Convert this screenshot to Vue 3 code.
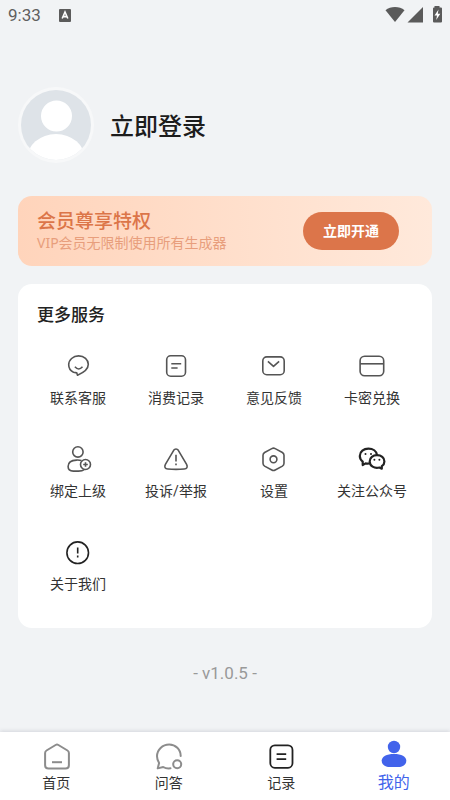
<script setup>
import { ref } from 'vue'

const services = [
  { id: 'contact', label: '联系客服' },
  { id: 'bill', label: '消费记录' },
  { id: 'mail', label: '意见反馈' },
  { id: 'card', label: '卡密兑换' },
  { id: 'bind', label: '绑定上级' },
  { id: 'report', label: '投诉/举报' },
  { id: 'settings', label: '设置' },
  { id: 'wechat', label: '关注公众号' },
  { id: 'about', label: '关于我们' },
]

const tabs = [
  { id: 'home', label: '首页' },
  { id: 'chat', label: '问答' },
  { id: 'record', label: '记录' },
  { id: 'mine', label: '我的' },
]

const active = ref('mine')
</script>

<template>
  <div class="page">
    <header class="status">
      <span class="time">9:33</span>
      <svg class="badge" viewBox="0 0 12 13" aria-hidden="true">
        <rect width="12" height="13" rx="1" fill="#5b5b5b" />
        <path d="M3.2 9.5 L6 3 L8.8 9.5 M4.2 7.6 H7.8" fill="none" stroke="#fff" stroke-width="1.6" />
      </svg>
      <svg class="signals" viewBox="0 0 60 20" aria-hidden="true">
        <path d="M0.5 5.2 C5.5 0.8 14.5 0.8 19.5 5.2 L10 17 Z" fill="#5a5a5a" />
        <path d="M22.5 17.5 L38 2 V17.5 Z" fill="#5a5a5a" />
        <path d="M49.5 1 H54.5 V2.5 H56 Q57 2.5 57 3.5 V16.5 Q57 17.5 56 17.5 H49 Q48 17.5 48 16.5 V3.5 Q48 2.5 49 2.5 H49.5 Z" fill="#5a5a5a" />
        <path d="M53.5 4.5 L49.5 10.5 H52 L51.2 15 L55.3 8.8 H52.8 Z" fill="#fff" />
      </svg>
    </header>

    <main class="content">
      <section class="profile">
        <svg class="avatar" viewBox="0 0 76 76" aria-hidden="true">
          <defs>
            <clipPath id="avatar-clip"><circle cx="38" cy="38" r="35" /></clipPath>
          </defs>
          <circle cx="38" cy="38" r="38" fill="#f7f8f9" />
          <g clip-path="url(#avatar-clip)">
            <rect width="76" height="76" fill="#dee3e8" />
            <circle cx="38.5" cy="29" r="15.5" fill="#fff" />
            <ellipse cx="38" cy="72" rx="29" ry="25" fill="#fff" />
          </g>
        </svg>
        <button type="button" class="login">立即登录</button>
      </section>

      <section class="vip">
        <div class="vip-text">
          <h2>会员尊享特权</h2>
          <p>VIP会员无限制使用所有生成器</p>
        </div>
        <button type="button" class="open">立即开通</button>
      </section>

      <section class="card">
        <h2>更多服务</h2>
        <div class="grid">
          <button v-for="s in services" :key="s.id" type="button" class="service">
            <svg class="icon" :class="{ dark: s.id === 'about' || s.id === 'wechat' }" viewBox="0 0 28 28" aria-hidden="true">
              <g v-if="s.id === 'contact'">
                <path d="M9.5 20.2 C6.5 18.8 4.7 16 4.7 12.8 C4.7 7.8 9.1 3.9 14.6 3.9 C20.1 3.9 24.3 7.6 24.3 12.3 C24.3 17.2 19.6 20.7 13.5 23.2 L12.8 20.9 Z" />
                <path d="M10.9 14.8 Q14.7 19.2 18.5 14.8" />
              </g>
              <g v-else-if="s.id === 'bill'">
                <rect x="4.7" y="3.8" width="18.8" height="20.4" rx="4" />
                <path d="M9.3 11.7 H19.2 M9.3 16 H15.6" />
              </g>
              <g v-else-if="s.id === 'mail'">
                <rect x="2.8" y="4.9" width="21.4" height="17.8" rx="4" />
                <path d="M7.9 9.4 L13.5 14.4 L19.1 9.4" />
              </g>
              <g v-else-if="s.id === 'card'">
                <rect x="2.1" y="4.2" width="23.6" height="19.6" rx="4.5" />
                <path d="M2.1 11.8 H25.7" />
              </g>
              <g v-else-if="s.id === 'bind'">
                <circle cx="13.9" cy="6.9" r="5.2" />
                <path d="M17.5 15.6 C16 15.2 14.3 15 12.5 15.1 C7 15.3 4.1 18 4.1 21.5 C4.1 24.7 5.8 26.1 9.3 26.1 H14.5 C16.8 26.1 18.8 25.7 20.2 24.6" />
                <circle cx="21.5" cy="19.5" r="5" />
                <path d="M19.2 19.5 H23.8 M21.5 17.2 V21.8" />
              </g>
              <g v-else-if="s.id === 'report'">
                <path d="M11.7 5.3 C12.8 3.6 15.2 3.6 16.3 5.3 L24.6 19.3 C26 21.9 24.9 23.8 22.2 24 C17 24.5 11 24.5 5.8 24 C3.1 23.8 2 21.9 3.4 19.3 Z" />
                <path d="M14 9.8 V16.4 M14 18.5 V20.3" />
              </g>
              <g v-else-if="s.id === 'settings'">
                <path d="M11.8 3.6 Q13.5 2.7 15.2 3.6 L22.4 7.5 Q24 8.5 24 10.3 V18.3 Q24 20.1 22.4 21.1 L15.2 25 Q13.5 25.9 11.8 25 L4.6 21.1 Q3 20.1 3 18.3 V10.3 Q3 8.5 4.6 7.5 Z" />
                <circle cx="13.5" cy="14.3" r="3.4" />
              </g>
              <g v-else-if="s.id === 'wechat'" class="bold">
                <path d="M12 18.3 C10.5 18.8 9 18.7 7.6 18.4 L4.7 20 V16.6 C2.8 15 1.8 13 1.8 10.9 C1.8 6.6 5.7 3.6 10.4 3.6 C15 3.6 18.5 6.2 19 10" />
                <path d="M19 10.2 C23.2 10.2 26.4 12.8 26.4 16.4 C26.4 18.4 25.4 20 23.8 21.2 V23.7 L21.4 22.5 C16.2 23.8 11.7 20.8 11.7 16.4 C11.7 12.8 15 10.2 19 10.2 Z" />
                <g class="solid">
                  <circle cx="7.5" cy="9" r="1" />
                  <circle cx="13" cy="9" r="1" />
                  <circle cx="16.4" cy="14.8" r="1" />
                  <circle cx="21.4" cy="14.8" r="1" />
                </g>
              </g>
              <g v-else>
                <circle cx="13.7" cy="14.7" r="10.8" />
                <path d="M13.7 9.4 V15.5 M13.7 17.5 V19.5" />
              </g>
            </svg>
            <span>{{ s.label }}</span>
          </button>
        </div>
      </section>

      <p class="version">- v1.0.5 -</p>
    </main>

    <nav class="tabs">
      <a v-for="t in tabs" :key="t.id" href="#" class="tab" :class="{ active: active === t.id }" @click.prevent="active = t.id">
        <svg class="tab-icon" viewBox="0 0 30 30" aria-hidden="true">
          <g v-if="t.id === 'home'" fill="none" stroke="#8c8c8c" stroke-width="2" stroke-linejoin="round">
            <path d="M4.1 12 Q4.1 10.3 5.5 9.5 L14.6 4 Q16 3.2 17.4 4 L26.5 9.5 Q27.9 10.3 27.9 12 V24.2 Q27.9 27.6 24.5 27.6 H7.5 Q4.1 27.6 4.1 24.2 Z" />
            <path d="M11 21.2 H21" />
          </g>
          <g v-else-if="t.id === 'chat'" fill="none" stroke="#8c8c8c" stroke-width="2" stroke-linecap="round" stroke-linejoin="round">
            <path d="M26.7 15 C26.7 8.4 21.5 3.5 15.2 3.5 C8.5 3.5 3 8.7 3 15.2 C3 18.3 4.2 20.5 5.1 22 L3.7 27.4 L9.2 26 C11.5 27.4 13.7 27.7 16.5 27.3" />
            <circle cx="23.2" cy="23.2" r="4" />
          </g>
          <g v-else-if="t.id === 'record'" fill="none" stroke="#222" stroke-width="1.8">
            <rect x="4.3" y="4.4" width="22.2" height="22.4" rx="4.5" />
            <path d="M10.6 13.1 H20.2 M10.6 18.1 H20.2" />
          </g>
          <g v-else fill="#4263eb">
            <circle cx="15" cy="8" r="6.2" />
            <path d="M15 15 C22.5 15 27.3 17.7 27.3 21.5 C27.3 26 23.5 28 19.5 28 H10.5 C6.5 28 2.7 26 2.7 21.5 C2.7 17.7 7.5 15 15 15 Z" />
          </g>
        </svg>
        <span>{{ t.label }}</span>
      </a>
    </nav>
  </div>
</template>

<style>
body {
  background: #f1f3f5;
}
</style>

<style scoped>
.page {
  display: flex;
  flex-direction: column;
  min-height: 100vh;
  background: #f1f3f5;
  color: #222;
  font-family: Roboto, "Noto Sans CJK SC", sans-serif;
}

button {
  margin: 0;
  padding: 0;
  border: 0;
  background: none;
  color: inherit;
  font: inherit;
}

h2,
p {
  margin: 0;
}

.status {
  display: flex;
  align-items: center;
  height: 30px;
  padding: 0 5px 0 8px;
}

.time {
  color: #5f5f5f;
  font-size: 17px;
  line-height: 30px;
}

.badge {
  width: 12px;
  height: 13px;
  margin-left: 18px;
}

.signals {
  width: 60px;
  height: 20px;
  margin-left: auto;
}

.content {
  flex: 1;
  padding: 57px 18px 0;
}

.profile {
  display: flex;
  align-items: center;
  gap: 16px;
}

.avatar {
  width: 76px;
  height: 76px;
}

.login {
  padding-top: 3px;
  color: #1c1c1c;
  font-size: 24px;
  font-weight: 500;
  line-height: 36px;
}

.vip {
  display: flex;
  align-items: center;
  justify-content: space-between;
  height: 70px;
  margin-top: 33px;
  padding: 0 33px 0 19px;
  border-radius: 14px;
  background: linear-gradient(90deg, #ffd4bb, #ffe9db);
}

.vip-text {
  font-family: "Noto Sans", "Noto Sans CJK SC", sans-serif;
}

.vip-text h2 {
  color: #dc7548;
  font-size: 19px;
  font-weight: 500;
  line-height: 24px;
}

.vip-text p {
  color: #e89e7c;
  font-size: 14px;
  line-height: 20px;
}

.open {
  width: 96px;
  height: 38px;
  padding-bottom: 2px;
  border-radius: 19px;
  background: #dc754a;
  color: #fff;
  font-size: 14px;
  font-weight: 700;
}

.card {
  margin-top: 18px;
  padding: 19px 11px 33px;
  border-radius: 14px;
  background: #fff;
}

.card h2 {
  padding-left: 8px;
  font-size: 17px;
  font-weight: 500;
  line-height: 24px;
}

.grid {
  display: grid;
  grid-template-columns: repeat(4, 1fr);
  row-gap: 36px;
  padding-top: 25px;
}

.service {
  display: flex;
  flex-direction: column;
  align-items: center;
  gap: 8px;
  color: #333;
  font-size: 14px;
  line-height: 21px;
  white-space: nowrap;
}

.icon {
  width: 28px;
  height: 28px;
  fill: none;
  stroke: #555;
  stroke-width: 1.6;
  stroke-linejoin: round;
}

.icon.dark {
  stroke: #222;
}

.icon .bold {
  stroke-width: 2.2;
}

.icon .solid {
  fill: #222;
  stroke: none;
}

.version {
  margin-top: 33px;
  color: #999;
  font-size: 17px;
  line-height: 24px;
  text-align: center;
}

.tabs {
  display: grid;
  grid-template-columns: repeat(4, 1fr);
  height: 68px;
  background: #fff;
  box-shadow: 0 -1px 4px rgba(60, 60, 90, 0.16);
}

.tab {
  display: flex;
  flex-direction: column;
  align-items: center;
  padding-top: 9px;
  color: #333;
  font-size: 14px;
  line-height: 24px;
  text-decoration: none;
}

.tab-icon {
  width: 30px;
  height: 30px;
}

.tab.active {
  padding-top: 7px;
  color: #4263eb;
  font-size: 16px;
  line-height: 28px;
}
</style>
